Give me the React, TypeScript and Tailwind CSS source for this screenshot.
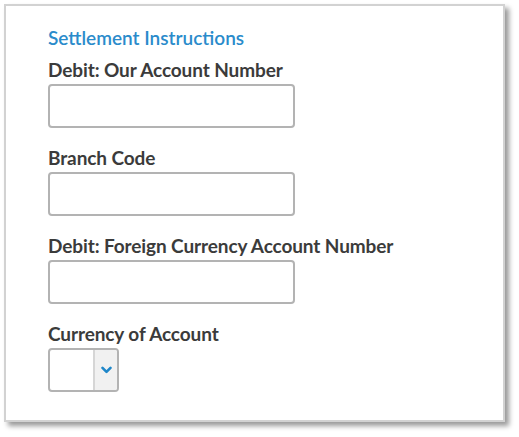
import { useState } from 'react';

interface FieldDef {
  label: string;
  name: string;
}

const fields: FieldDef[] = [
  { label: 'Debit: Our Account Number', name: 'ourAccount' },
  { label: 'Branch Code', name: 'branchCode' },
  { label: 'Debit: Foreign Currency Account Number', name: 'foreignAccount' },
];

export default function App() {
  const [values, setValues] = useState<Record<string, string>>({});
  const [currency, setCurrency] = useState('');

  return (
    <div className="min-h-screen bg-white p-[4px] font-['Lato','Liberation_Sans',sans-serif]">
      <div className="w-[501px] h-[418px] border-2 border-[#d2d2d2] bg-white shadow-[4px_4px_5px_rgba(0,0,0,0.4)] pl-[42px] pt-[20px]">
        <h2 className="text-[19px] leading-[24px] font-semibold text-[#2a8bcb] mb-[8px]">
          Settlement Instructions
        </h2>

        <div className="flex flex-col gap-[18px]">
          {fields.map((f) => (
            <div key={f.name} className="flex flex-col">
              <label className="text-[19px] leading-[24px] font-bold text-[#3b3b3b] mb-[2px] tracking-[-0.1px]">
                {f.label}
              </label>
              <input
                type="text"
                name={f.name}
                value={values[f.name] ?? ''}
                onChange={(e) => setValues({ ...values, [f.name]: e.target.value })}
                className="w-[247px] h-[44px] border-2 border-[#b3b3b3] rounded-[4px] bg-white px-2 outline-none"
              />
            </div>
          ))}

          {/* currency dropdown */}
          <div className="flex flex-col">
            <label className="text-[19px] leading-[24px] font-bold text-[#3b3b3b] mb-[2px] tracking-[-0.1px]">
              Currency of Account
            </label>
            <div className="relative w-[71px] h-[44px] border-2 border-[#b3b3b3] rounded-[4px] bg-white flex overflow-hidden">
              <select
                value={currency}
                onChange={(e) => setCurrency(e.target.value)}
                className="absolute inset-0 opacity-0"
              >
                <option value=""></option>
                <option value="USD">USD</option>
                <option value="EUR">EUR</option>
              </select>
              <div className="flex-1">{currency}</div>
              <div className="w-[24px] h-full bg-[#f1f1f1] border-l-2 border-[#d6d6d6] flex items-center justify-center">
                <svg width="11" height="8" viewBox="0 0 11 8">
                  <path d="M1.5 1.8 L5.5 5.8 L9.5 1.8" fill="none" stroke="#1f87c9" strokeWidth="2.6" strokeLinecap="round" strokeLinejoin="round" />
                </svg>
              </div>
            </div>
          </div>
        </div>
      </div>
    </div>
  );
}
